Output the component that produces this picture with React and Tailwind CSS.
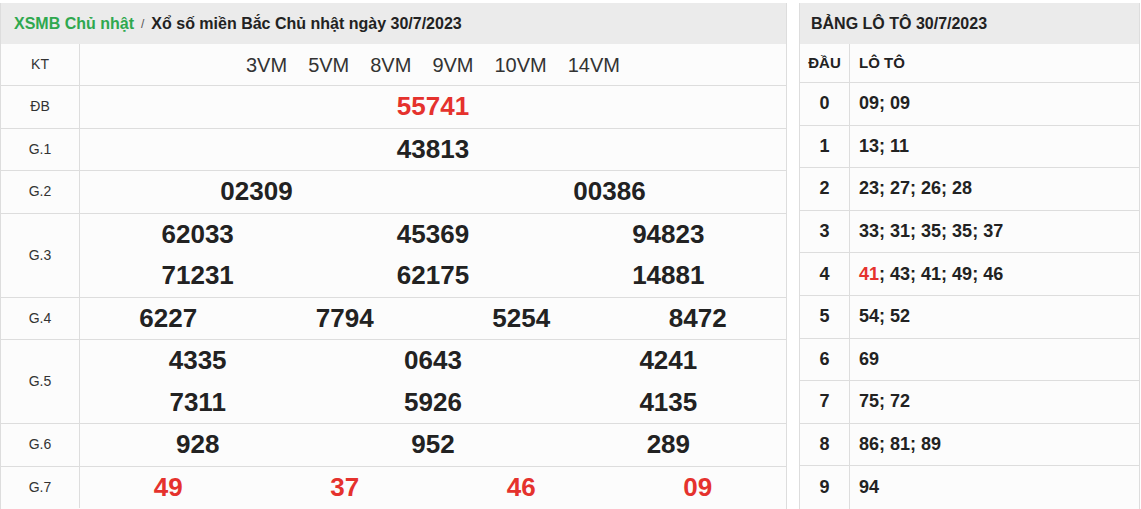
const giai = [
  { label: "ĐB", cols: 1, nums: ["55741"], red: true },
  { label: "G.1", cols: 1, nums: ["43813"] },
  { label: "G.2", cols: 2, nums: ["02309", "00386"] },
  { label: "G.3", cols: 3, nums: ["62033", "45369", "94823", "71231", "62175", "14881"] },
  { label: "G.4", cols: 4, nums: ["6227", "7794", "5254", "8472"] },
  { label: "G.5", cols: 3, nums: ["4335", "0643", "4241", "7311", "5926", "4135"] },
  { label: "G.6", cols: 3, nums: ["928", "952", "289"] },
  { label: "G.7", cols: 4, nums: ["49", "37", "46", "09"], red: true },
];

const gridCols = {
  1: "grid-cols-1",
  2: "grid-cols-2",
  3: "grid-cols-3",
  4: "grid-cols-4",
};

const loto = [
  ["09", "09"],
  ["13", "11"],
  ["23", "27", "26", "28"],
  ["33", "31", "35", "35", "37"],
  ["41*", "43", "41", "49", "46"],
  ["54", "52"],
  ["69"],
  ["75", "72"],
  ["86", "81", "89"],
  ["94"],
];

const vm = ["3VM", "5VM", "8VM", "9VM", "10VM", "14VM"];

export default function App() {
  return (
    <div
      className="flex gap-[12px] bg-white pt-[3px] text-[#222]"
      style={{ fontFamily: '"Liberation Sans", Arial, sans-serif' }}
    >
      {/* Bảng kết quả */}
      <div className="w-[787px] shrink-0 border-x border-[#dddddd] bg-[#fcfcfc]">
        <div className="flex h-[41px] items-center bg-[#ebebeb] pl-[13px] text-[16px] font-bold">
          <span className="text-[#2fa84f]">XSMB Chủ nhật</span>
          <span className="mx-[7px] text-[12px] font-normal text-[#555]">/</span>
          <span>Xổ số miền Bắc Chủ nhật ngày 30/7/2023</span>
        </div>

        <div className="flex h-[42px] border-b border-[#dddddd]">
          <div className="flex w-[79px] shrink-0 items-center justify-center border-r border-[#dddddd] text-[14px] text-[#333]">
            KT
          </div>
          <div className="flex flex-1 items-center justify-center gap-[21px] text-[20px] text-[#333]">
            {vm.map((v) => (
              <span key={v}>{v}</span>
            ))}
          </div>
        </div>

        {giai.map((g) => (
          <div key={g.label} className="flex border-b border-[#dddddd] last:border-b-0">
            <div className="flex w-[79px] shrink-0 items-center justify-center border-r border-[#dddddd] text-[14px] text-[#333]">
              {g.label}
            </div>
            <div className={`grid flex-1 ${gridCols[g.cols]}`}>
              {g.nums.map((n, i) => (
                <div
                  key={i}
                  className={`flex h-[41.5px] items-center justify-center text-[26px] font-bold ${
                    g.red ? "text-[#e5322d]" : "text-[#222]"
                  }`}
                >
                  {n}
                </div>
              ))}
            </div>
          </div>
        ))}
      </div>

      {/* Bảng lô tô */}
      <div className="w-[341px] shrink-0 border-x border-[#dddddd] bg-[#fcfcfc]">
        <div className="flex h-[41px] items-center bg-[#ebebeb] pl-[11px] text-[16px] font-bold">
          BẢNG LÔ TÔ 30/7/2023
        </div>
        <div className="flex h-[39px] border-b border-[#dddddd] text-[15px] font-bold">
          <div className="flex w-[50px] shrink-0 items-center justify-center border-r border-[#dddddd]">
            ĐẦU
          </div>
          <div className="flex items-center pl-[9px]">LÔ TÔ</div>
        </div>
        {loto.map((list, dau) => (
          <div key={dau} className="flex h-[42.6px] border-b border-[#dddddd] text-[18px] font-bold last:border-b-0">
            <div className="flex w-[50px] shrink-0 items-center justify-center border-r border-[#dddddd]">
              {dau}
            </div>
            <div className="flex items-center pl-[9px]">
              {list.map((n, i) => (
                <span key={i} className="whitespace-pre">
                  {n.endsWith("*") ? <span className="text-[#e5322d]">{n.slice(0, -1)}</span> : n}
                  {i < list.length - 1 ? "; " : ""}
                </span>
              ))}
            </div>
          </div>
        ))}
      </div>
    </div>
  );
}
